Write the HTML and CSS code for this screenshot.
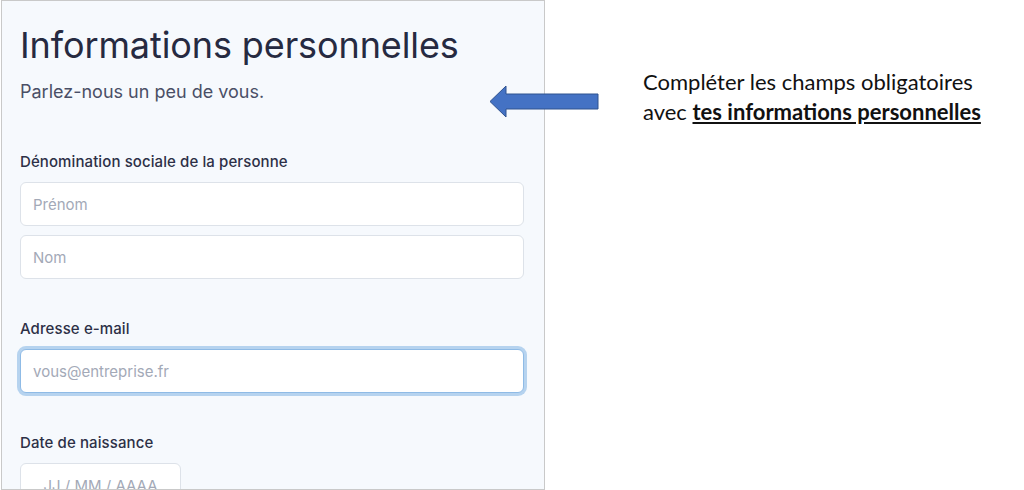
FILE: index.html
```html
<!DOCTYPE html>
<html>

<head>
    <title>Informations personnelles</title>
    <link rel="stylesheet" href="styles.css">
</head>

<body>

    <div class="page">
        <div class="panel">
            <h1>Informations personnelles</h1>
            <p class="subtitle">Parlez-nous un peu de vous.</p>

            <div class="field first">
                <label>Dénomination sociale de la personne</label>
                <div class="stack">
                    <input type="text" placeholder="Prénom">
                    <input type="text" placeholder="Nom">
                </div>
            </div>

            <div class="field">
                <label>Adresse e-mail</label>
                <input class="focused" type="text" placeholder="vous@entreprise.fr">
            </div>

            <div class="field">
                <label>Date de naissance</label>
                <input class="date" type="text" placeholder="JJ / MM / AAAA">
            </div>
        </div>

        <svg class="arrow" width="112" height="36" viewBox="0 0 112 36">
            <polygon points="1,16.5 17,1 17,9 109,9 109,24 17,24 17,32" fill="#4472c4" stroke="#2f528f" stroke-width="1"/>
        </svg>

        <div class="note">
            <p>Compléter les champs obligatoires</p>
            <p>avec <b>tes informations personnelles</b></p>
        </div>
    </div>

</body>

</html>
```

FILE: styles.css
```css
body {
    margin: 0;
    background-color: #fff;
}

.page {
    position: relative;
    display: flex;
    height: 490px;
    overflow: hidden;
}

.panel {
    box-sizing: border-box;
    width: 544px;
    height: 490px;
    margin-left: 1px;
    padding: 0 20px 0 18px;
    background-color: #f6f9fd;
    border: 1px solid #c9c9c9;
    overflow: hidden;
    font-family: Inter, "Noto Sans", sans-serif;
}

h1 {
    margin: 22px 0 0 0;
    font-size: 36px;
    line-height: 44px;
    font-weight: 400;
    color: #262a41;
    letter-spacing: -0.1px;
}

.subtitle {
    margin: 13px 0 0 0;
    font-size: 18px;
    line-height: 24px;
    color: #4a4f66;
}

.field {
    margin-top: 40px;
}

.field.first {
    margin-top: 48px;
}

.field label {
    display: block;
    margin-bottom: 10px;
    font-size: 15px;
    line-height: 20px;
    font-weight: 500;
    color: #2d3047;
    letter-spacing: 0.1px;
}

.stack {
    display: flex;
    flex-direction: column;
    gap: 9px;
}

input {
    box-sizing: border-box;
    display: block;
    width: 504px;
    height: 44px;
    padding: 0 12px;
    background-color: #fff;
    border: 1px solid #dde2e9;
    border-radius: 6px;
    font-family: Inter, "Noto Sans", sans-serif;
    font-size: 15px;
    color: #2d3047;
    outline: none;
}

input::placeholder {
    color: #a3a9b7;
}

input.focused {
    border-color: #8fbbe6;
    box-shadow: 0 0 0 3px #b6d3ef;
}

input.date {
    width: 161px;
    text-align: center;
}

.arrow {
    position: absolute;
    left: 489px;
    top: 85px;
}

.note {
    margin-left: 98px;
    padding-top: 67px;
    font-family: Lato, "Open Sans", sans-serif;
    font-size: 22px;
    line-height: 30px;
    color: #111;
}

.note p {
    margin: 0;
    white-space: nowrap;
}

.note b {
    text-decoration: underline;
}
```
